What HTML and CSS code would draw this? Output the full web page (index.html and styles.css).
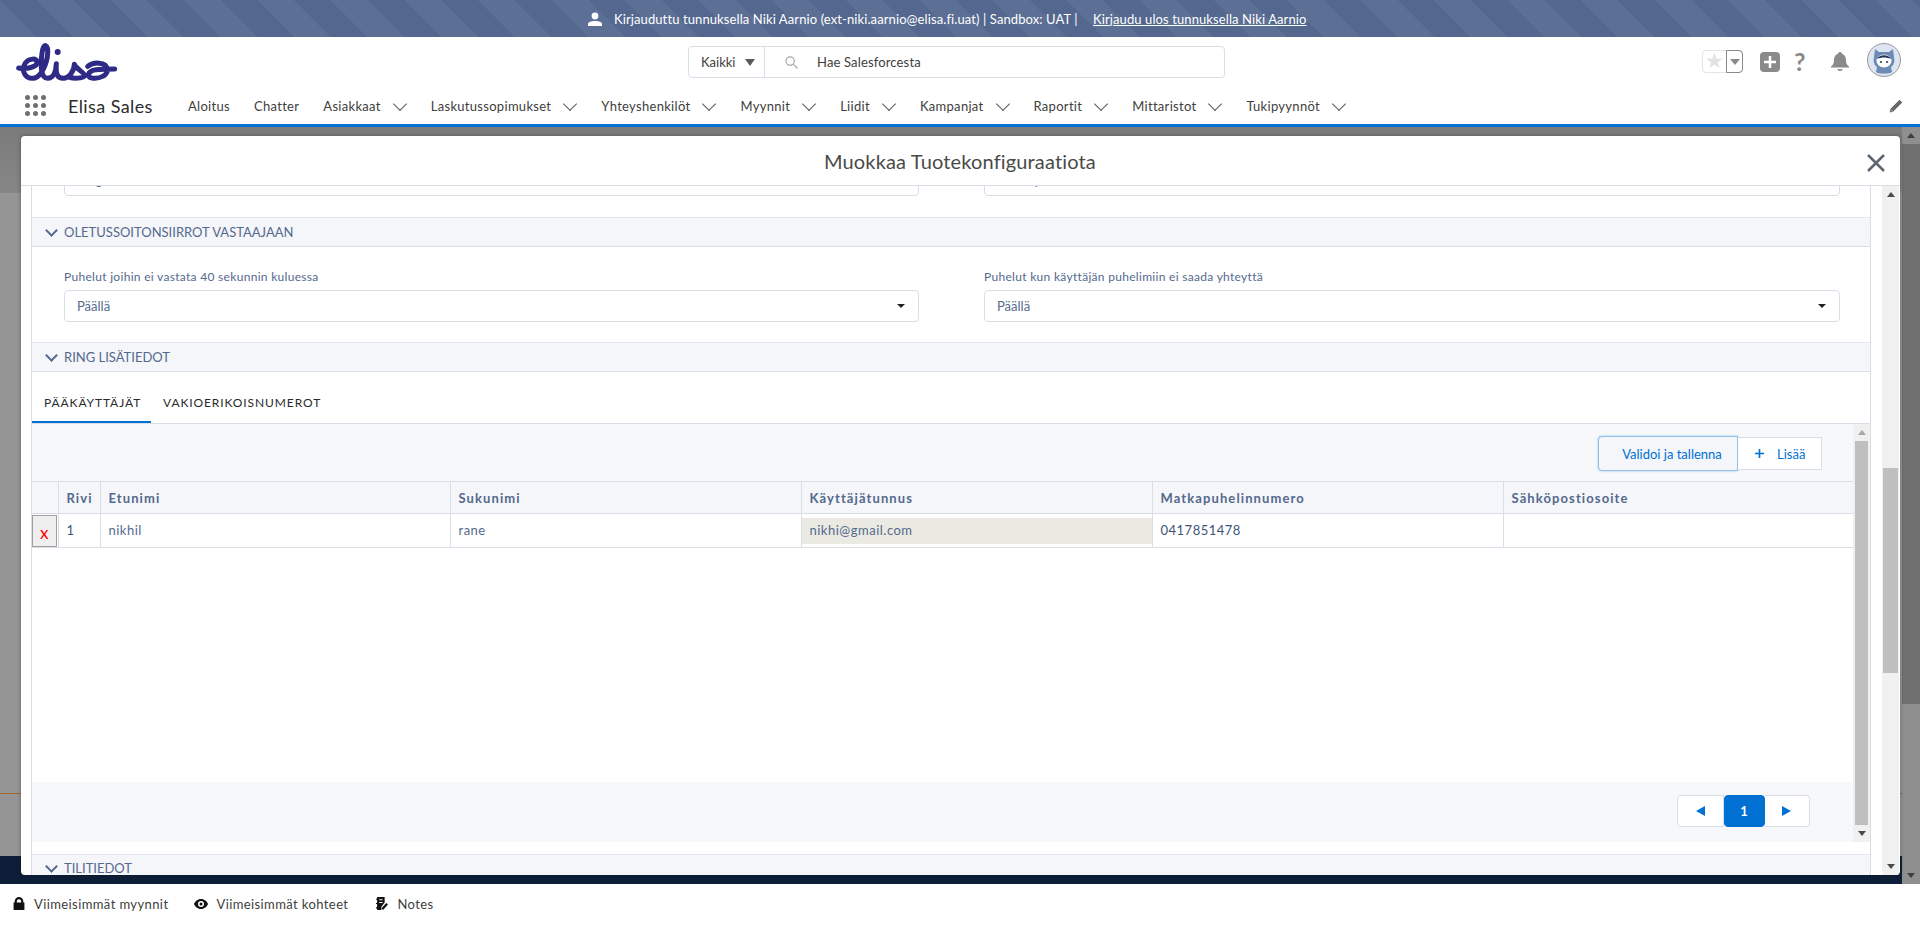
FILE: index.html
```html
<!DOCTYPE html>
<html lang="fi">
<head>
    <meta charset="UTF-8">
    <meta name="viewport" content="width=device-width, initial-scale=1.0">
    <title>Muokkaa Tuotekonfiguraatiota</title>
    <link rel="stylesheet" href="styles.css">
</head>
<body>
    <div class="login-bar">
        <svg class="login-icon" viewBox="0 0 14 14"><circle cx="7" cy="4" r="3.4"/><path d="M0 14v-2c0-2 3-3 7-3s7 1 7 3v2z"/></svg>
        <span class="login-text">Kirjauduttu tunnuksella Niki Aarnio (ext-niki.aarnio@elisa.fi.uat) | Sandbox: UAT |</span>
        <a class="login-link">Kirjaudu ulos tunnuksella Niki Aarnio</a>
    </div>

    <header class="global-header">
        <div class="header-top">
            <svg class="logo" viewBox="12 -5 345 144" aria-label="Elisa">
                <g fill="none" stroke="#2e2a86" stroke-width="15" stroke-linecap="round" stroke-linejoin="round">
                    <path d="M38 85C60 90 95 82 93 67C91 55 70 55 58 70C45 90 55 116 80 116C100 116 118 85 124 52C130 8 110 8 108 42C104 70 102 116 125 116C142 116 150 95 151 72C149 100 152 116 172 116C190 116 205 92 205 74C212 90 238 100 236 108C230 118 200 116 190 113M245 80C262 66 300 66 304 88C306 108 280 118 258 115C240 112 245 93 270 90C290 88 310 88 326 88"/>
                </g>
                <circle cx="155" cy="37" r="9" fill="#2e2a86"/>
            </svg>
            <div class="search">
                <div class="search-scope">Kaikki <span class="caret-gray"></span></div>
                <div class="search-input">
                    <svg class="search-icon" viewBox="0 0 14 14"><circle cx="5.5" cy="5.5" r="4.5"/><path d="M9 9l4.5 4.5"/></svg>
                    <span>Hae Salesforcesta</span>
                </div>
            </div>
            <div class="header-tools">
                <div class="fav">
                    <span class="fav-star">★</span>
                    <span class="fav-menu"><span class="caret-gray small"></span></span>
                </div>
                <span class="add-box">
                    <svg viewBox="0 0 20 20"><path d="M10 4v12M4 10h12"/></svg>
                </span>
                <span class="help">?</span>
                <svg class="bell" viewBox="0 0 18 19"><path d="M9 0c1 0 1.700.7 1.700 1.600C13.500 2.400 15 5 15 8c0 3 .6 5 3 6.500v1H0v-1C2.400 13 3 11 3 8c0-3 1.500-5.600 4.300-6.400C7.300.7 8 0 9 0zM6.500 17h5c0 1-1 2-2.500 2s-2.500-1-2.500-2z"/></svg>
                <svg class="avatar" viewBox="0 0 34 34">
                    <circle cx="17" cy="17" r="16.500" fill="#dce5f0" stroke="#9a9a9a"/>
                    <path d="M8 6l4 3h10l4-3 1 8c1 4 0 8-3 10l1 5c-2 2-14 2-16 0l1-5c-3-2-4-6-3-10z" fill="#6d8cb5"/>
                    <ellipse cx="17" cy="18" rx="7.500" ry="6.500" fill="#fff"/>
                    <path d="M10 16c2-5 12-5 14 0-4-2-10-2-14 0z" fill="#1f3556"/>
                    <circle cx="14" cy="19" r="1" fill="#1f3556"/><circle cx="20" cy="19" r="1" fill="#1f3556"/>
                </svg>
            </div>
        </div>
        <nav class="app-nav">
            <span class="launcher">
                <i></i><i></i><i></i><i></i><i></i><i></i><i></i><i></i><i></i>
            </span>
            <span class="app-name">Elisa Sales</span>
            <ul class="nav-items">
                <li>Aloitus</li>
                <li>Chatter</li>
                <li class="has-menu">Asiakkaat</li>
                <li class="has-menu">Laskutussopimukset</li>
                <li class="has-menu">Yhteyshenkilöt</li>
                <li class="has-menu">Myynnit</li>
                <li class="has-menu">Liidit</li>
                <li class="has-menu">Kampanjat</li>
                <li class="has-menu">Raportit</li>
                <li class="has-menu">Mittaristot</li>
                <li class="has-menu">Tukipyynnöt</li>
            </ul>
            <svg class="edit-icon" viewBox="0 0 14 14"><path d="M10.500.5l3 3L4 13 .5 13.500 1 10zM2 10.500l1.500 1.500"/></svg>
        </nav>
    </header>

    <div class="workspace">
        <div class="under-top"></div>
        <div class="under-mid"><div class="under-line"></div></div>
        <div class="under-navy"></div>

        <div class="page-scroll">
            <span class="arrow-up dark"></span>
            <div class="page-thumb"></div>
            <span class="arrow-down dark"></span>
        </div>

        <section class="modal">
            <div class="modal-head">
                <h1>Muokkaa Tuotekonfiguraatiota</h1>
                <svg class="modal-close" viewBox="0 0 18 18"><path d="M1 1l16 16M17 1L1 17"/></svg>
            </div>
            <div class="modal-body">
                <div class="record">
                    <div class="field-row clipped">
                        <div class="fake-select">Ring</div>
                        <div class="fake-select">Kaikki puhelut</div>
                    </div>

                    <div class="section-bar">OLETUSSOITONSIIRROT VASTAAJAAN</div>
                    <div class="field-row">
                        <div class="field">
                            <label>Puhelut joihin ei vastata 40 sekunnin kuluessa</label>
                            <div class="fake-select">Päällä<span class="caret-black"></span></div>
                        </div>
                        <div class="field">
                            <label>Puhelut kun käyttäjän puhelimiin ei saada yhteyttä</label>
                            <div class="fake-select">Päällä<span class="caret-black"></span></div>
                        </div>
                    </div>

                    <div class="section-bar">RING LISÄTIEDOT</div>
                    <div class="tabs">
                        <span class="tab active">PÄÄKÄYTTÄJÄT</span>
                        <span class="tab">VAKIOERIKOISNUMEROT</span>
                    </div>

                    <div class="tab-panel">
                        <div class="panel-main">
                            <div class="toolbar">
                                <button class="btn btn-focus">Validoi ja tallenna</button>
                                <button class="btn btn-add"><svg viewBox="0 0 12 12"><path d="M6 1v10M1 6h10"/></svg>Lisää</button>
                            </div>
                            <table class="grid">
                                <colgroup>
                                    <col class="col-del"><col class="col-no"><col class="col-first"><col class="col-wide"><col class="col-wide"><col class="col-wide"><col>
                                </colgroup>
                                <thead>
                                    <tr>
                                        <th></th><th>Rivi</th><th>Etunimi</th><th>Sukunimi</th><th>Käyttäjätunnus</th><th>Matkapuhelinnumero</th><th>Sähköpostiosoite</th>
                                    </tr>
                                </thead>
                                <tbody>
                                    <tr>
                                        <td class="cell-del"><span class="del-btn">x</span></td>
                                        <td class="cell-dark">1</td>
                                        <td>nikhil</td>
                                        <td>rane</td>
                                        <td class="cell-locked"><span>nikhi@gmail.com</span></td>
                                        <td class="cell-dark">0417851478</td>
                                        <td></td>
                                    </tr>
                                </tbody>
                            </table>
                            <div class="grid-empty"></div>
                            <div class="pager-area">
                                <div class="pager">
                                    <span class="page-btn"><i class="tri-left"></i></span>
                                    <span class="page-btn current">1</span>
                                    <span class="page-btn"><i class="tri-right"></i></span>
                                </div>
                            </div>
                        </div>
                        <div class="panel-scroll">
                            <span class="arrow-up light"></span>
                            <div class="panel-thumb"></div>
                            <span class="arrow-down"></span>
                        </div>
                    </div>

                    <div class="section-gap"></div>
                    <div class="section-bar last">TILITIEDOT</div>
                </div>
                <div class="modal-scroll">
                    <span class="arrow-up"></span>
                    <div class="modal-track"><div class="modal-thumb"></div></div>
                    <span class="arrow-down"></span>
                </div>
            </div>
        </section>
    </div>

    <footer class="utility-bar">
        <span class="util-item">
            <svg viewBox="0 0 10 12"><path d="M1 5V4a4 4 0 0 1 8 0v1h1v7H0V5zM3 5h4V4a2 2 0 0 0-4 0z" fill-rule="evenodd"/></svg>
            Viimeisimmät myynnit
        </span>
        <span class="util-item eye">
            <svg viewBox="0 0 14 10"><path d="M7 0c3.500 0 6 2.500 7 5-1 2.500-3.500 5-7 5S1 7.500 0 5c1-2.500 3.500-5 7-5zm0 2a3 3 0 1 0 0 6 3 3 0 0 0 0-6zm0 1.500a1.500 1.500 0 1 1 0 3 1.500 1.500 0 0 1 0-3z" fill-rule="evenodd"/></svg>
            Viimeisimmät kohteet
        </span>
        <span class="util-item notes">
            <svg viewBox="0 0 12 12"><path d="M1 0h7v5L5 9v3H1v-1.500H0v-1h1V6.500H0v-1h1V2.500H0v-1h1zM3 2v1h3V2zM3 4.500v1h3v-1zM9.500 5.500l1.500 1.500-4 4.500H5.500V10z" fill-rule="evenodd"/></svg>
            Notes
        </span>
    </footer>
</body>
</html>
```

FILE: styles.css
```css
* {
    margin: 0;
    padding: 0;
    box-sizing: border-box;
}

body {
    font-family: 'Lato', 'Noto Sans', sans-serif;
    font-size: 13px;
    color: #54698d;
    width: 1920px;
    height: 925px;
    overflow: hidden;
    display: flex;
    flex-direction: column;
    background: #fff;
}

/* login as bar */
.login-bar {
    height: 37px;
    flex: none;
    display: flex;
    align-items: center;
    padding-left: 588px;
    color: #fff;
    letter-spacing: .1px;
    background: repeating-linear-gradient(45deg, #5c6f94 0, #5c6f94 26px, #54678e 26px, #54678e 52px);
}

.login-icon {
    width: 14px;
    height: 14px;
    fill: #fff;
    margin-right: 12px;
}

.login-text {
    width: 479px;
}

.login-link {
    text-decoration: underline;
}

/* header */
.global-header {
    flex: none;
    height: 90px;
    border-bottom: 3px solid #0070d2;
    background: #fff;
}

.header-top {
    height: 50px;
    position: relative;
    display: flex;
    align-items: flex-start;
}

.logo {
    width: 115px;
    height: 48px;
    margin: 1px 0 0 10px;
    flex: none;
}

.search {
    margin: 9px 0 0 563px;
    width: 537px;
    height: 32px;
    display: flex;
    border: 1px solid #d8dde6;
    border-radius: 4px;
    color: #3e3e3c;
    font-size: 13px;
}

.search-scope {
    width: 76px;
    border-right: 1px solid #d8dde6;
    display: flex;
    align-items: center;
    padding-left: 12px;
    gap: 10px;
}

.caret-gray {
    display: inline-block;
    width: 0;
    height: 0;
    border-left: 5px solid transparent;
    border-right: 5px solid transparent;
    border-top: 7px solid #5a5a5a;
}

.caret-gray.small {
    border-top-width: 6px;
    border-top-color: #8a8a8a;
}

.search-input {
    flex: 1;
    display: flex;
    align-items: center;
    padding-left: 20px;
    gap: 19px;
    letter-spacing: .15px;
}

.search-icon {
    width: 13px;
    height: 13px;
    fill: none;
    stroke: #a8a8a8;
    stroke-width: 1.300;
}

.header-tools {
    margin: 6px 0 0 477px;
    display: flex;
    align-items: flex-start;
}

.fav {
    margin-top: 7px;
    width: 41px;
    height: 23px;
    display: flex;
    border: 1px solid #e4e4e4;
    border-radius: 4px;
}

.fav-star {
    width: 23px;
    text-align: center;
    color: #e2e2e2;
    font-family: 'DejaVu Sans', sans-serif;
    font-size: 21px;
    line-height: 20px;
}

.fav-menu {
    flex: 1;
    border: 1px solid #8a8a8a;
    border-radius: 0 4px 4px 0;
    margin: -1px -1px -1px 0;
    display: flex;
    align-items: center;
    justify-content: center;
}

.add-box {
    margin: 9px 0 0 17px;
    width: 20px;
    height: 20px;
    background: #8a8a8a;
    border-radius: 4px;
    display: flex;
}

.add-box svg {
    width: 20px;
    height: 20px;
    fill: none;
    stroke: #fff;
    stroke-width: 2.500;
}

.help {
    margin: 3px 0 0 14px;
    width: 13px;
    color: #8a8a8a;
    font-size: 25px;
    line-height: 30px;
    font-weight: 700;
}

.bell {
    margin: 9px 0 0 24px;
    width: 18px;
    height: 19px;
    fill: #8a8a8a;
}

.avatar {
    margin-left: 18px;
    width: 34px;
    height: 34px;
}

.app-nav {
    height: 37px;
    display: flex;
    align-items: center;
    padding: 0 17px 0 25px;
    color: #3e3e3c;
}

.launcher {
    width: 21px;
    height: 21px;
    display: grid;
    grid-template-columns: repeat(3, 5px);
    grid-template-rows: repeat(3, 5px);
    gap: 3px;
}

.launcher i {
    background: #6f6f6f;
    border-radius: 50%;
}

.app-name {
    margin-left: 22px;
    width: 120px;
    font-size: 18px;
    letter-spacing: .4px;
    color: #2b2b2b;
}

.nav-items {
    list-style: none;
    display: flex;
    gap: 24px;
    flex: 1;
    font-size: 13px;
    letter-spacing: .3px;
}

.has-menu {
    display: flex;
    align-items: center;
}

.has-menu::after {
    content: '';
    width: 9px;
    height: 9px;
    margin: -4px 2px 0 14px;
    border-right: 1px solid #5a5a5a;
    border-bottom: 1px solid #5a5a5a;
    transform: rotate(45deg);
}

.edit-icon {
    width: 14px;
    height: 14px;
    fill: #6a6a6a;
    stroke: #fff;
    stroke-width: .5;
}

/* page behind the dialog */
.workspace {
    flex: 1;
    position: relative;
    display: flex;
    flex-direction: column;
    overflow: hidden;
}

.under-top {
    height: 66px;
    background: linear-gradient(#7b7b7b, #868686);
}

.under-mid {
    flex: 1;
    background: #959595;
    position: relative;
}

.under-line {
    position: absolute;
    left: 0;
    right: 0;
    top: 600px;
    height: 1px;
    background: #a8682c;
}

.under-navy {
    height: 28px;
    background: #0d1f38;
}

.page-scroll {
    position: absolute;
    top: 0;
    bottom: 0;
    right: 0;
    width: 18px;
    background: #8f8f8f;
    display: flex;
    flex-direction: column;
    align-items: center;
}

.page-thumb {
    width: 100%;
    height: 560px;
    background: #6f6f6f;
    margin-bottom: auto;
}

.arrow-up,
.arrow-down {
    flex: none;
    width: 0;
    height: 0;
    border-left: 4px solid transparent;
    border-right: 4px solid transparent;
}

.arrow-up {
    border-bottom: 5px solid #4a4a4a;
    margin: 6px 0;
}

.arrow-down {
    border-top: 5px solid #4a4a4a;
    margin: 6px 0;
}

.arrow-up.dark,
.arrow-down.dark {
    border-top-color: #3f3f3f;
    border-bottom-color: #3f3f3f;
}

.arrow-up.light {
    border-bottom-color: #a6a6a6;
}

/* dialog */
.modal {
    position: absolute;
    left: 21px;
    top: 9px;
    width: 1879px;
    height: 739px;
    background: #fff;
    border-radius: 4px;
    box-shadow: 0 0 4px rgba(0, 0, 0, 0.35);
    display: flex;
    flex-direction: column;
    overflow: hidden;
}

.modal-head {
    height: 50px;
    flex: none;
    border-bottom: 1px solid #d8dde6;
    position: relative;
    display: flex;
    align-items: center;
    padding-left: 803px;
}

.modal-head h1 {
    font-size: 20px;
    font-weight: 400;
    letter-spacing: .15px;
    color: #4a4a48;
}

.modal-close {
    position: absolute;
    right: 15px;
    top: 18px;
    width: 18px;
    height: 18px;
    fill: none;
    stroke: #5c6672;
    stroke-width: 2.500;
}

.modal-body {
    flex: 1;
    display: flex;
    padding-left: 10px;
    overflow: hidden;
}

.record {
    width: 1840px;
    border-left: 1px solid #d8dde6;
    border-right: 1px solid #d8dde6;
    display: flex;
    flex-direction: column;
}

.modal-scroll {
    margin-left: 11px;
    width: 17px;
    background: #f0f0f0;
    display: flex;
    flex-direction: column;
    align-items: center;
}

.modal-track {
    flex: 1;
    width: 100%;
    padding: 0 1px;
}

.modal-thumb {
    margin-top: 265px;
    height: 205px;
    background: #bfbfbf;
}

.section-bar {
    height: 30px;
    flex: none;
    display: flex;
    align-items: center;
    padding-left: 15px;
    background: #f4f6f9;
    border-top: 1px solid #e4e7ee;
    border-bottom: 1px solid #d8dde6;
    font-size: 13px;
}

.section-bar::before {
    content: '';
    width: 7px;
    height: 7px;
    margin: -4px 8px 0 0;
    border-right: 2px solid #54698d;
    border-bottom: 2px solid #54698d;
    transform: rotate(45deg);
}

.section-bar.last {
    height: 21px;
    border-bottom: 0;
    align-items: flex-start;
    padding-top: 5px;
}

.section-bar.last::before {
    margin-top: 2px;
}

.field-row {
    display: grid;
    grid-template-columns: 855px 856px;
    column-gap: 65px;
    padding-left: 32px;
    height: 95px;
    flex: none;
}

.field-row.clipped {
    height: 31px;
    overflow: hidden;
}

.field-row.clipped .fake-select {
    margin-top: -22px;
}

.field {
    padding-top: 20px;
}

.field label {
    display: block;
    height: 23px;
    line-height: 20px;
    font-size: 12px;
    letter-spacing: .3px;
}

.fake-select {
    height: 32px;
    border: 1px solid #d8dde6;
    border-radius: 4px;
    padding-left: 12px;
    display: flex;
    align-items: center;
    justify-content: space-between;
    padding-right: 13px;
    background: #fff;
}

.caret-black {
    width: 0;
    height: 0;
    border-left: 4px solid transparent;
    border-right: 4px solid transparent;
    border-top: 4px solid #222;
}

/* tabs */
.tabs {
    height: 52px;
    flex: none;
    display: flex;
    border-bottom: 1px solid #d8dde6;
}

.tab {
    height: 51px;
    padding: 22px 0 0 12px;
    color: #2b2b2b;
    letter-spacing: .9px;
    font-size: 12px;
    line-height: 18px;
}

.tab.active {
    width: 119px;
    border-bottom: 2px solid #0070d2;
}

.tab-panel {
    height: 418px;
    flex: none;
    display: flex;
}

.panel-main {
    flex: 1;
    display: flex;
    flex-direction: column;
}

.toolbar {
    height: 57px;
    flex: none;
    background: #f7f8fa;
    display: flex;
    align-items: flex-start;
    justify-content: flex-end;
    padding: 13px 31px 0 0;
}

.btn {
    font: inherit;
    color: #0070d2;
    height: 33px;
    background: #fff;
    border: 1px solid #d8dde6;
}

.btn-focus {
    width: 140px;
    height: 35px;
    margin-top: -1px;
    padding-left: 8px;
    background: #f4f6f9;
    border: 1px solid #93c0ec;
    border-radius: 4px 0 0 4px;
    box-shadow: 0 0 2px #7fb5ea;
}

.btn-add {
    width: 84px;
    border-left: 0;
    display: flex;
    align-items: center;
    padding-left: 16px;
    gap: 12px;
}

.btn-add svg {
    width: 11px;
    height: 11px;
    fill: none;
    stroke: #0070d2;
    stroke-width: 1.800;
}

.grid {
    width: 100%;
    flex: none;
    table-layout: fixed;
    border-collapse: collapse;
    background: #fff;
}

.col-del {
    width: 26px;
}

.col-no {
    width: 42px;
}

.col-first {
    width: 350px;
}

.col-wide {
    width: 351px;
}

.grid th,
.grid td {
    border: 1px solid #d8dde6;
    border-left: 0;
    text-align: left;
    padding: 0 8px;
    font-size: 13px;
    letter-spacing: .5px;
}

.grid th:last-child,
.grid td:last-child {
    border-right: 0;
}

.grid th {
    height: 32px;
    background: #f4f6f9;
    font-weight: 700;
    letter-spacing: 1.1px;
}

.grid td {
    height: 34px;
    padding-bottom: 2px;
}

.grid td.cell-del {
    padding: 0;
}

.del-btn {
    display: block;
    width: 25px;
    height: 32px;
    background: #efefef;
    border: 1px solid #a0a0a0;
    color: #f00;
    font-size: 17px;
    line-height: 34px;
    text-align: center;
}

.cell-dark {
    color: #3d5378;
}

.grid td.cell-locked {
    padding: 0;
}

.cell-locked span {
    display: block;
    height: 26px;
    line-height: 24px;
    padding-left: 8px;
    background: #eaeae2;
}

.grid-empty {
    flex: 1;
    background: #fff;
}

.pager-area {
    height: 60px;
    flex: none;
    background: #f7f8fa;
    padding-top: 13px;
}

.pager {
    margin-left: 1645px;
    width: 133px;
    height: 32px;
    display: flex;
}

.page-btn {
    flex: 1;
    background: #fff;
    border: 1px solid #d8dde6;
    border-radius: 4px 0 0 4px;
    display: flex;
    align-items: center;
    justify-content: center;
}

.page-btn:last-child {
    border-radius: 0 4px 4px 0;
    border-left: 0;
}

.page-btn.current {
    flex: none;
    width: 41px;
    background: #0070d2;
    border-color: #0070d2;
    border-radius: 4px;
    color: #fff;
    font-weight: 700;
}

.tri-left,
.tri-right {
    width: 0;
    height: 0;
    border-top: 5px solid transparent;
    border-bottom: 5px solid transparent;
}

.tri-left {
    border-right: 9px solid #0070d2;
}

.tri-right {
    border-left: 9px solid #0070d2;
}

.panel-scroll {
    width: 17px;
    flex: none;
    background: #f0f0f0;
    display: flex;
    flex-direction: column;
    align-items: center;
}

.panel-thumb {
    flex: 1;
    width: 13px;
    background: #bfbfbf;
}

.section-gap {
    height: 12px;
    flex: none;
}

/* utility bar */
.utility-bar {
    height: 41px;
    flex: none;
    display: flex;
    align-items: center;
    padding: 0 0 2px 13px;
    background: #fff;
    color: #3e3e3c;
    font-size: 13px;
    letter-spacing: .4px;
}

.util-item {
    display: flex;
    align-items: center;
    gap: 9px;
    margin-right: 26px;
}

.util-item svg {
    width: 12px;
    height: 13px;
    fill: #111;
}

.util-item.eye {
    gap: 8px;
    margin-right: 28px;
}

.util-item.eye svg {
    width: 14px;
    height: 10px;
}

.util-item.notes {
    gap: 8px;
}

.util-item.notes svg {
    width: 13px;
    height: 13px;
}
```
